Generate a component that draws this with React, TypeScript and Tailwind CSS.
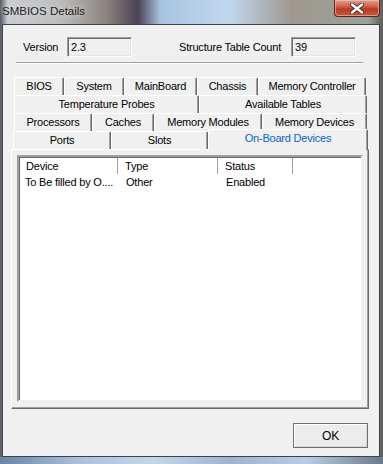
import React from 'react';

type TabItem = { label: string; w: string; active?: boolean };

const TAB_ROWS: { ml: string; tabs: TabItem[] }[] = [
  {
    ml: 'ml-[11px]',
    tabs: [
      { label: 'BIOS', w: 'w-[50px]' },
      { label: 'System', w: 'w-[60px]' },
      { label: 'MainBoard', w: 'w-[73px]' },
      { label: 'Chassis', w: 'w-[61px]' },
      { label: 'Memory Controller', w: 'w-[108px]' },
    ],
  },
  {
    ml: 'ml-[11px]',
    tabs: [
      { label: 'Temperature Probes', w: 'w-[185px]' },
      { label: 'Available Tables', w: 'w-[168px]' },
    ],
  },
  {
    ml: 'ml-[11px]',
    tabs: [
      { label: 'Processors', w: 'w-[78px]' },
      { label: 'Caches', w: 'w-[62px]' },
      { label: 'Memory Modules', w: 'w-[108px]' },
      { label: 'Memory Devices', w: 'w-[105px]' },
    ],
  },
  {
    ml: 'ml-[10px]',
    tabs: [
      { label: 'Ports', w: 'w-[98px]' },
      { label: 'Slots', w: 'w-[97px]' },
      { label: 'On-Board Devices', w: 'w-[160px]', active: true },
    ],
  },
];

const Tab: React.FC<{ tab: TabItem }> = ({ tab }) => {
  if (tab.active) {
    return (
      <div
        className={`${tab.w} relative z-10 -mt-[2px] h-[21px] flex items-start justify-center pt-0 bg-[#f0f0f0] border-t border-l border-r border-white border-r-[#696969] shadow-[inset_-1px_0_0_#a0a0a0] rounded-t-[2px] text-[#0066cc]`}
      >
        {tab.label}
      </div>
    );
  }
  return (
    <div
      className={`${tab.w} h-[18px] flex items-center justify-center bg-[#f0f0f0] border-t border-l border-r border-white border-r-[#696969] shadow-[inset_-1px_0_0_#a0a0a0] rounded-t-[2px]`}
    >
      {tab.label}
    </div>
  );
};

const TextBox: React.FC<{ value: string }> = ({ value }) => (
  <div className="w-[65px] h-[20px] flex items-center pl-[3px] bg-[#f0f0f0] border border-t-[#a0a0a0] border-l-[#a0a0a0] border-b-white border-r-white shadow-[inset_1px_1px_0_#696969,inset_-1px_-1px_0_#e3e3e3]">
    {value}
  </div>
);

export default function App() {
  return (
    <div className="w-[383px] h-[464px] overflow-hidden flex flex-col bg-[linear-gradient(90deg,#4e565e_0%,#c9ccd0_2%,#bdbcba_16%,#8a827c_28%,#4c4258_36%,#a8c4e0_42%,#c0d8ee_60%,#a09890_76%,#9aa29a_96%,#5a5e5a_100%)] font-['Liberation_Sans',Arial,sans-serif] text-[11px] tracking-[-0.2px] text-black">
      {/* Title bar */}
      <div className="h-[24px] flex items-start justify-between">
        <div className="pl-[2px] pt-[3px] text-[11.5px] tracking-normal text-[#1e1e1e] [text-shadow:0_0_6px_#e8ecf0]">
          SMBIOS Details
        </div>
        <div className="mr-[3px] w-[46px] h-[17px] flex items-center justify-center rounded-b-[4px] border border-t-0 border-[#5a2218] bg-[linear-gradient(180deg,#e0a090_0%,#cc5a44_45%,#b83a22_55%,#c85a3c_100%)] shadow-[inset_0_0_0_1px_rgba(255,210,200,0.5)]">
          <svg width="14" height="11" viewBox="0 0 14 11">
            <path
              d="M2 1.5 L12 9.5 M12 1.5 L2 9.5"
              stroke="#4a2a24"
              strokeWidth="4.2"
              strokeLinecap="round"
            />
            <path
              d="M2 1.5 L12 9.5 M12 1.5 L2 9.5"
              stroke="#ffffff"
              strokeWidth="2.4"
              strokeLinecap="round"
            />
          </svg>
        </div>
      </div>

      {/* Middle: side frames + client */}
      <div className="flex flex-1">
        <div className="w-[2px]" />
        <div className="w-[378px] h-[433px] border border-[#3c4248] bg-[#f0f0f0] flex flex-col">
          {/* Version row */}
          <div className="pt-[12px] pl-[20px] flex items-center">
            <div className="w-[44px]">Version</div>
            <TextBox value="2.3" />
            <div className="ml-[47px] w-[112px]">Structure Table Count</div>
            <TextBox value="39" />
          </div>

          {/* Etched separator */}
          <div className="ml-[13px] mt-[5px] w-[347px] border-t border-b border-t-[#a0a0a0] border-b-white" />

          {/* Tabs */}
          <div className="mt-[13px] flex flex-col">
            {TAB_ROWS.map((row, i) => (
              <div key={i} className={`${row.ml} flex h-[18px]`}>
                {row.tabs.map(tab => (
                  <Tab key={tab.label} tab={tab} />
                ))}
              </div>
            ))}
          </div>

          {/* Tab panel */}
          <div className="ml-[8px] w-[358px] h-[260px] border-t border-l border-r border-b border-white border-r-[#696969] border-b-[#696969] shadow-[inset_-1px_-1px_0_#a0a0a0] pt-[5px] pl-[5px]">
            <div className="w-[346px] h-[247px] bg-white border-2 border-t-[#a0a0a0] border-l-[#a0a0a0] border-b-[#f0f0f0] border-r-[#f0f0f0] shadow-[inset_1px_1px_0_#696969]">
              <div className="flex h-[16px] mt-[1px] ml-[1px] bg-white">
                <div className="w-[98px] pl-[6px] flex items-center border-r border-r-[#a0a0a0]">Device</div>
                <div className="w-[100px] pl-[6px] flex items-center border-l border-l-white border-r border-r-[#a0a0a0]">Type</div>
                <div className="w-[75px] pl-[6px] flex items-center border-l border-l-white border-r border-r-[#a0a0a0]">Status</div>
                <div className="flex-1 border-l border-l-white" />
              </div>
              <div className="flex h-[17px] ml-[1px] items-center">
                <div className="w-[99px] pl-[5px] whitespace-nowrap overflow-hidden">To Be filled by O....</div>
                <div className="w-[101px] pl-[7px]">Other</div>
                <div className="w-[76px] pl-[6px]">Enabled</div>
              </div>
            </div>
          </div>

          {/* OK button */}
          <div className="mt-[14px] ml-[290px] w-[75px] h-[25px] flex items-center justify-center border border-[#707070] bg-[#ececec] shadow-[inset_1px_1px_0_#ffffff,inset_-1px_-1px_0_#d4d4d4] text-[12px]">
            OK
          </div>
        </div>
        <div className="w-[3px]" />
      </div>

      {/* Bottom frame */}
      <div className="h-[7px] bg-[linear-gradient(90deg,#6a84a4_0%,#a8c0dc_20%,#c4d6ea_40%,#9cb4d0_60%,#b8cce4_80%,#6a7a8c_100%)]" />
    </div>
  );
}
